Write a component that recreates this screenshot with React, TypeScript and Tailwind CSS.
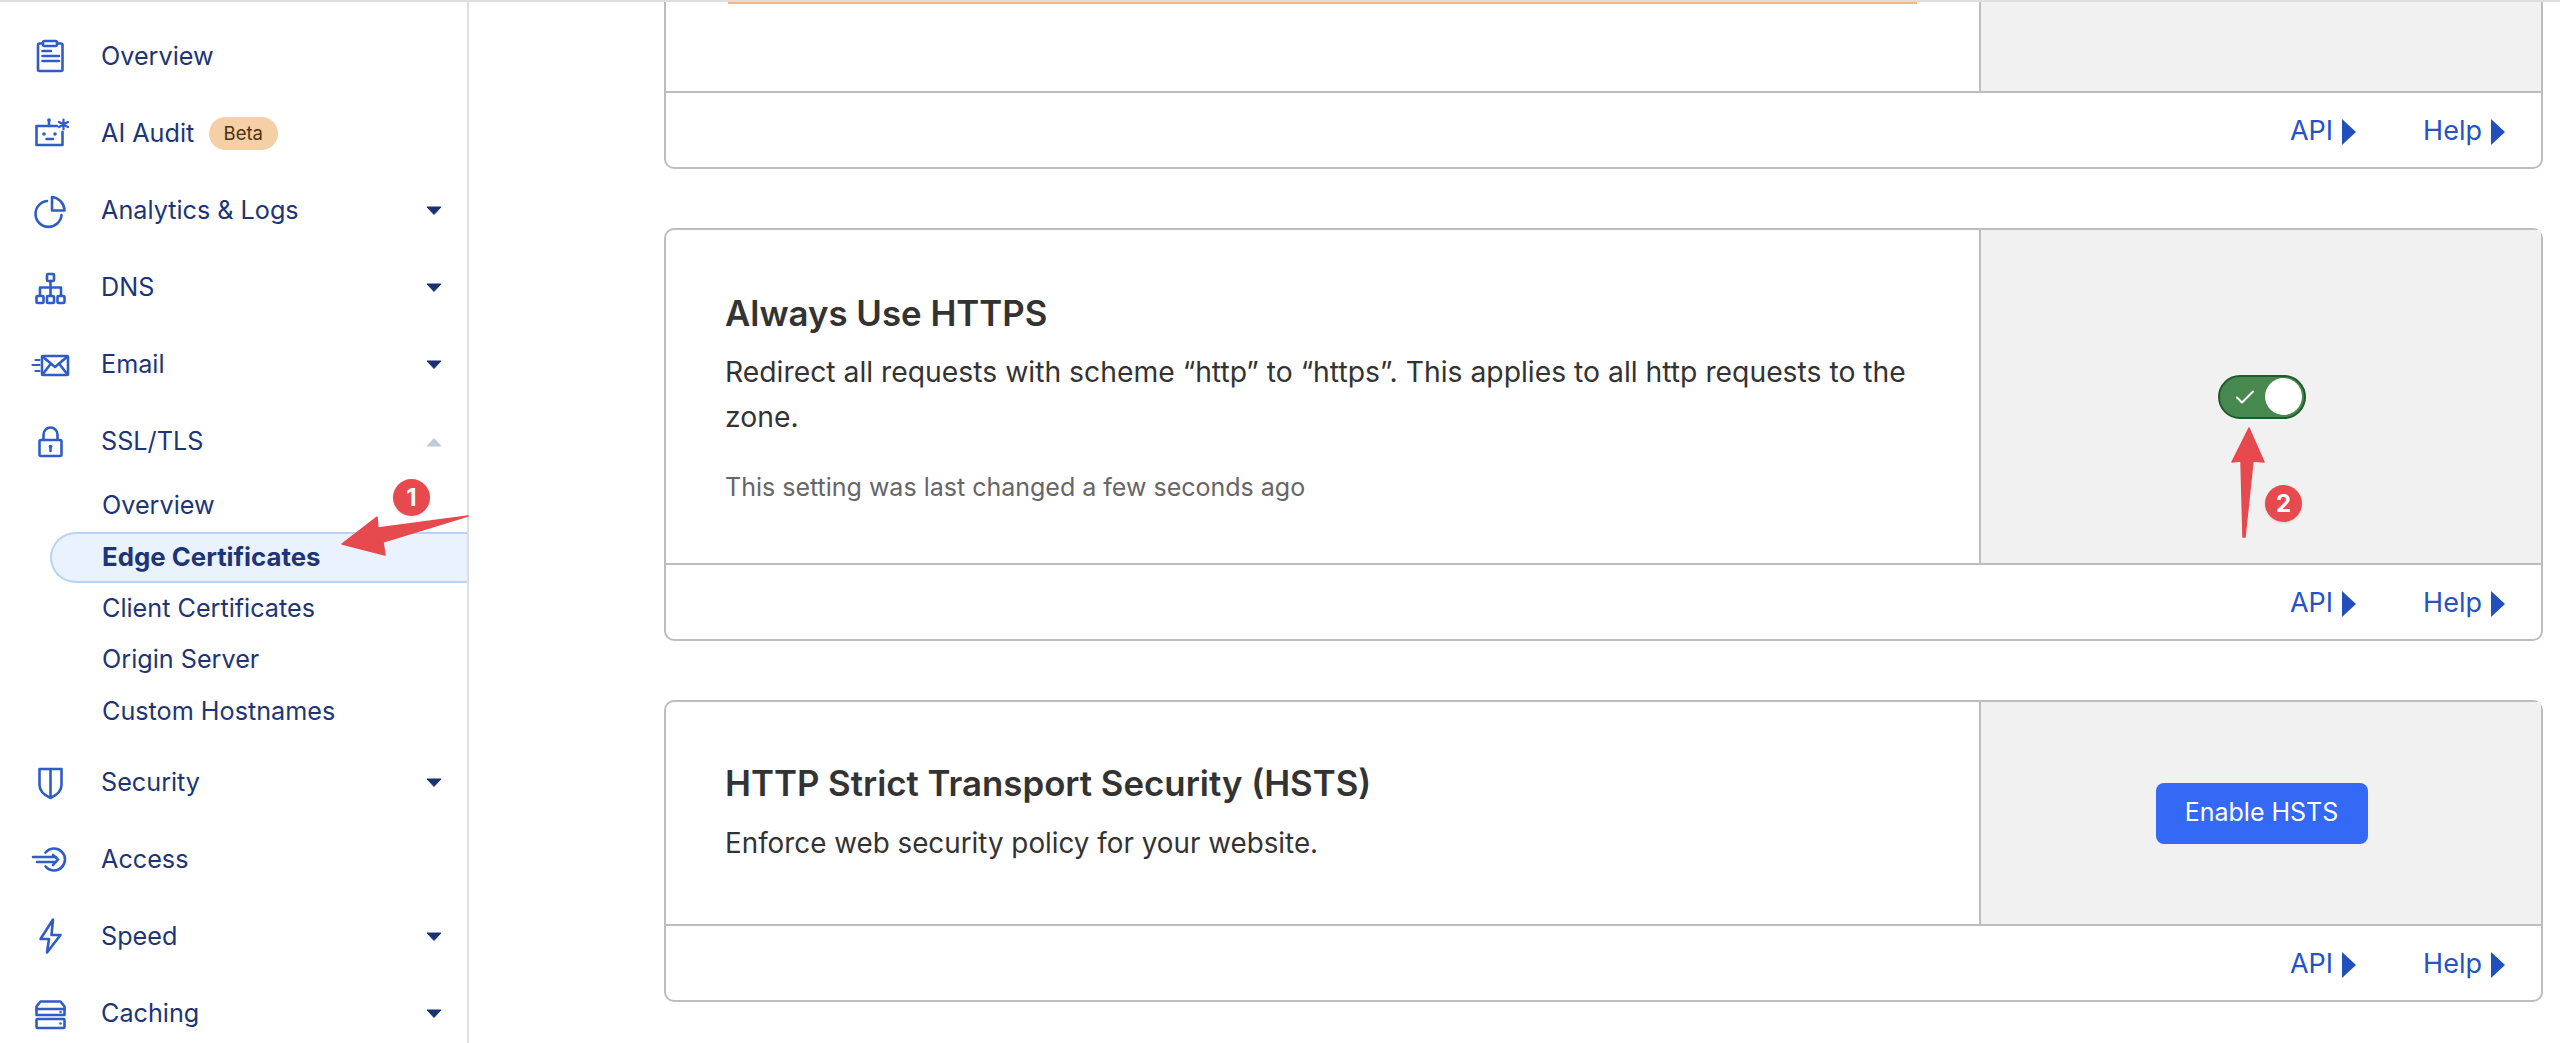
import React from "react";

const FONT = "font-['Inter','Liberation_Sans',sans-serif]";

function Icon({ children }: { children: React.ReactNode }) {
  return (
    <svg width="44" height="44" viewBox="0 0 44 44" fill="none" stroke="#2F5CC6" strokeWidth="2.6" strokeLinejoin="round" strokeLinecap="round" className="shrink-0">
      {children}
    </svg>
  );
}

const icons: Record<string, React.ReactNode> = {
  overview: (
    <>
      <rect x="10" y="8.5" width="24.5" height="27.5" rx="1.5" />
      <rect x="15" y="6" width="14" height="5" rx="1.5" fill="#fff" />
      <path d="M14.5 16H23M14.5 21H31M14.5 26H31" />
    </>
  ),
  audit: (
    <>
      <path d="M29 14H8.5V33H34.5V20" />
      <path d="M21 14V8.5" />
      <circle cx="21" cy="8" r="1.8" fill="#2F5CC6" stroke="none" />
      <circle cx="16" cy="22" r="1.8" fill="#2F5CC6" stroke="none" />
      <circle cx="27" cy="22" r="1.8" fill="#2F5CC6" stroke="none" />
      <path d="M18.5 27H25" />
      <path d="M35.5 7.5V17.5M31 10L40 15M40 10L31 15" strokeWidth="2.2" />
    </>
  ),
  pie: (
    <>
      <path d="M19 12A13 13 0 1 0 33.5 26" />
      <path d="M24 8A14 14 0 0 1 36.5 21.5H24Z" />
    </>
  ),
  dns: (
    <>
      <rect x="19" y="8" width="7" height="7" rx="1" />
      <path d="M22.5 15V29M12 29V21.5H33V29" />
      <rect x="8.5" y="30" width="7" height="7" rx="1" />
      <rect x="19" y="30" width="7" height="7" rx="1" />
      <rect x="29.5" y="30" width="7" height="7" rx="1" />
    </>
  ),
  email: (
    <>
      <rect x="14" y="13" width="26" height="19" rx="1" />
      <path d="M14.5 13.5L27 24L39.5 13.5M14.5 31.5L23 20.5M39.5 31.5L31 20.5" />
      <path d="M7.5 17H11.5M4.5 22H11.5M7.5 28H11.5" strokeWidth="2.2" />
    </>
  ),
  lock: (
    <>
      <rect x="11.5" y="20" width="22" height="16" rx="1.5" />
      <path d="M15.5 20V14.5A7 7 0 0 1 29.5 14.5V20" />
      <circle cx="22.5" cy="26.5" r="1.8" fill="#2F5CC6" stroke="none" />
      <path d="M22.5 27V31" />
    </>
  ),
  shield: <path d="M11.5 8H33.5V24C33.5 30 28 34.5 22.5 37C17 34.5 11.5 30 11.5 24ZM22.5 8V37" />,
  access: (
    <>
      <path d="M17.5 14.5A11 11 0 1 1 17.5 28.5" />
      <path d="M5 19H28M9 24H28M25 17L30 21.5L25 27" />
    </>
  ),
  speed: <path d="M25 4.5L12.5 24H21L19 37.5L32.5 20H23.5Z" />,
  caching: (
    <>
      <path d="M8.5 23V14.5L12.5 9.5H32.5L36.5 14.5V23Z" />
      <path d="M8.5 17H36.5" />
      <rect x="8.5" y="27" width="28" height="9" rx="1" />
      <circle cx="32.5" cy="20" r="1.2" fill="#2F5CC6" stroke="none" />
      <circle cx="32.5" cy="31.5" r="1.2" fill="#2F5CC6" stroke="none" />
    </>
  ),
};

function Caret({ up }: { up?: boolean }) {
  return (
    <svg width="16" height="10" viewBox="0 0 16 10" className="shrink-0">
      {up ? (
        <path d="M1 9L8 1.5L15 9Z" fill="#BFCADB" stroke="#BFCADB" strokeLinejoin="round" />
      ) : (
        <path d="M1 1H15L8 8.5Z" fill="#1B3170" stroke="#1B3170" strokeLinejoin="round" />
      )}
    </svg>
  );
}

function NavRow({ icon, label, caret, up, beta }: { icon: string; label: string; caret?: boolean; up?: boolean; beta?: boolean }) {
  return (
    <div className="flex h-[77px] items-center pl-[28px] pr-[25px] text-[25.2px] text-[#1D3576]">
      <Icon>{icons[icon]}</Icon>
      <span className="ml-[29px] whitespace-nowrap">{label}</span>
      {beta && (
        <span className="ml-[14.5px] flex h-[33px] w-[69px] items-center justify-center rounded-full bg-[#F5CFA5] text-[18.5px] text-[#4E2F12]">Beta</span>
      )}
      {caret && (
        <span className="ml-auto flex">
          <Caret up={up} />
        </span>
      )}
    </div>
  );
}

function SubRow({ label }: { label: string }) {
  return <div className="flex h-[51.5px] items-center pl-[102px] text-[25.2px] text-[#1D3576]">{label}</div>;
}

function Footer() {
  const Link = ({ t }: { t: string }) => (
    <span className="flex items-center gap-[9px] text-[27px] text-[#2553C4]">
      {t}
      <svg width="14" height="26" viewBox="0 0 14 26">
        <path d="M0 0L14 13L0 26Z" fill="#2150BE" />
      </svg>
    </span>
  );
  return (
    <div className="flex h-[74px] items-center justify-end gap-[67px] pr-[36px] pt-[3px]">
      <Link t="API" />
      <Link t="Help" />
    </div>
  );
}

function Card({ children, panel, bodyH, clipped }: { children: React.ReactNode; panel: React.ReactNode; bodyH: string; clipped?: boolean }) {
  return (
    <section className={`w-[1879px] rounded-[10px] border-2 border-[#BDBDBD] bg-white ${clipped ? "rounded-t-none border-t-0" : ""}`}>
      <div className={`flex border-b-2 border-[#BDBDBD] ${bodyH}`}>
        <div className="flex min-w-0 flex-1 flex-col">{children}</div>
        <div className="flex w-[562px] shrink-0 items-center justify-center border-l-2 border-[#BDBDBD] bg-[#F1F1F1]">{panel}</div>
      </div>
      <Footer />
    </section>
  );
}

function Body({ title, children }: { title: string; children: React.ReactNode }) {
  return (
    <div className="flex flex-1 flex-col justify-center px-[59px] text-[#333333]">
      <h2 className="text-[34.8px] leading-[44px] font-semibold">{title}</h2>
      {children}
    </div>
  );
}

function Toggle() {
  return (
    <div className="ml-[1px] flex h-[44px] w-[88px] items-center justify-between rounded-full border-2 border-[#1F5A2C] bg-[#47884F] pl-[15px] pr-[2px]">
      <svg width="20" height="14" viewBox="0 0 20 14" fill="none" stroke="#fff" strokeWidth="2" strokeLinecap="round" strokeLinejoin="round">
        <path d="M2 7.5L7 12.5L18 1.5" />
      </svg>
      <span className="h-[37px] w-[37px] rounded-full bg-white" />
    </div>
  );
}

export default function App() {
  return (
    <div className={`relative flex h-[1043px] w-[2560px] flex-col overflow-hidden bg-white ${FONT}`}>
      <div className="h-[2px] shrink-0 bg-[#DEDEDE]" />
      <div className="flex min-h-0 flex-1">
        <nav className="w-[469px] shrink-0 border-r-2 border-[#DEDEDE] pt-[16px]">
          <NavRow icon="overview" label="Overview" />
          <NavRow icon="audit" label="AI Audit" beta />
          <NavRow icon="pie" label="Analytics & Logs" caret />
          <NavRow icon="dns" label="DNS" caret />
          <NavRow icon="email" label="Email" caret />
          <NavRow icon="lock" label="SSL/TLS" caret up />
          <SubRow label="Overview" />
          <div className="ml-[50px] flex h-[51.5px] items-center rounded-l-full border-y-2 border-l-2 border-[#B9D3F8] bg-[#EAF2FE] pl-[50px] text-[25.8px] font-bold text-[#1D3576]">
            Edge Certificates
          </div>
          <SubRow label="Client Certificates" />
          <SubRow label="Origin Server" />
          <SubRow label="Custom Hostnames" />
          <div className="h-[7px]" />
          <NavRow icon="shield" label="Security" caret />
          <NavRow icon="access" label="Access" />
          <NavRow icon="speed" label="Speed" caret />
          <NavRow icon="caching" label="Caching" caret />
        </nav>
        <main className="flex min-w-0 flex-1 flex-col gap-[59px] pl-[195px]">
          <Card clipped bodyH="h-[91px]" panel={null}>
            <div className="mx-[62px] h-[2px] bg-[#F1B88A]" />
          </Card>
          <Card bodyH="h-[335px]" panel={<Toggle />}>
            <Body title="Always Use HTTPS">
              <p className="mt-[15px] text-[28.3px] leading-[45px]">
                Redirect all requests with scheme “http” to “https”. This applies to all http requests to the zone.
              </p>
              <p className="mt-[31px] text-[25px] leading-[32px] text-[#666666]">This setting was last changed a few seconds ago</p>
            </Body>
          </Card>
          <Card
            bodyH="h-[224px]"
            panel={
              <button className="ml-[1px] flex h-[61px] w-[212px] items-center justify-center rounded-[8px] bg-[#3369F5] text-[25px] text-white">Enable HSTS</button>
            }
          >
            <Body title="HTTP Strict Transport Security (HSTS)">
              <p className="mt-[16px] text-[27.8px] leading-[45px]">Enforce web security policy for your website.</p>
            </Body>
          </Card>
        </main>
      </div>

      <svg className="pointer-events-none absolute left-0 top-0" width="2560" height="1043" viewBox="0 0 2560 1043">
        <path d="M342 544L377 517L378 528L468 516L383 542L385 555Z" fill="#E6494E" stroke="#E6494E" strokeWidth="1.5" strokeLinejoin="round" />
        <path d="M2249 428L2264 462L2253 461L2245 537L2243 537L2241 461L2232 462Z" fill="#E6494E" stroke="#E6494E" strokeWidth="1.5" strokeLinejoin="round" />
      </svg>
      <span className="absolute left-[393px] top-[479px] flex h-[37px] w-[37px] items-center justify-center rounded-full bg-[#E6494E] text-[24px] font-bold text-white shadow-sm">1</span>
      <span className="absolute left-[2265px] top-[485px] flex h-[37px] w-[37px] items-center justify-center rounded-full bg-[#E6494E] text-[24px] font-bold text-white shadow-sm">2</span>
    </div>
  );
}
